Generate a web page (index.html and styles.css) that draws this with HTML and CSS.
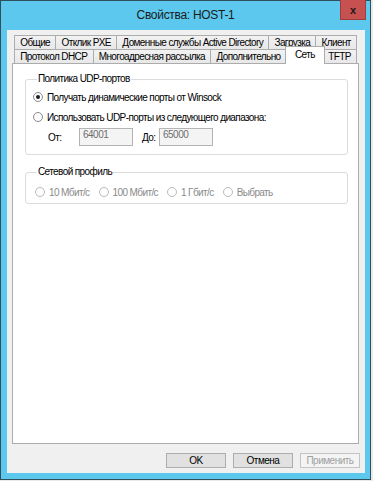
FILE: index.html
```html
<!DOCTYPE html>
<html lang="ru">
<head>
    <meta charset="UTF-8">
    <meta name="viewport" content="width=device-width, initial-scale=1.0">
    <title>Свойства: HOST-1</title>
    <link rel="stylesheet" href="styles.css">
</head>
<body>
    <div class="window">
        <div class="titlebar">
            <span></span>
            <div class="title">Свойства: HOST-1</div>
            <button class="close">x</button>
        </div>

        <div class="client">
            <div class="tabs">
                <div class="tab-row">
                    <div class="tab">Общие</div>
                    <div class="tab">Отклик PXE</div>
                    <div class="tab">Доменные службы Active Directory</div>
                    <div class="tab">Загрузка</div>
                    <div class="tab">Клиент</div>
                </div>
                <div class="tab-row">
                    <div class="tab">Протокол DHCP</div>
                    <div class="tab">Многоадресная рассылка</div>
                    <div class="tab">Дополнительно</div>
                    <div class="tab active">Сеть</div>
                    <div class="tab">TFTP</div>
                </div>
            </div>

            <div class="panel">
                <fieldset class="group">
                    <legend>Политика UDP-портов</legend>
                    <div class="option"><span class="radio checked"></span>Получать динамические порты от Winsock</div>
                    <div class="option"><span class="radio"></span>Использовать UDP-порты из следующего диапазона:</div>
                    <div class="range">
                        <span class="range-label">От:</span>
                        <input type="text" value="64001" disabled>
                        <span class="range-label short">До:</span>
                        <input type="text" value="65000" disabled>
                    </div>
                </fieldset>

                <fieldset class="group profile">
                    <legend>Сетевой профиль</legend>
                    <div class="speeds">
                        <div class="option disabled"><span class="radio"></span>10 Мбит/с</div>
                        <div class="option disabled"><span class="radio"></span>100 Мбит/с</div>
                        <div class="option disabled"><span class="radio"></span>1 Гбит/с</div>
                        <div class="option disabled"><span class="radio"></span>Выбрать</div>
                    </div>
                </fieldset>
            </div>

            <div class="buttons">
                <button class="btn">OK</button>
                <button class="btn">Отмена</button>
                <button class="btn" disabled>Применить</button>
            </div>
        </div>
    </div>
</body>
</html>
```

FILE: styles.css
```css
body {
    margin: 0;
    background: #e9e9e9;
    font-family: "Liberation Sans", Arial, sans-serif;
    font-size: 10px;
    letter-spacing: -0.6px;
    color: #000;
}
.window {
    width: 371px;
    height: 480px;
    box-sizing: border-box;
    background: #5cc8ee;
    border: 1px solid #2f4f5c;
    display: flex;
    flex-direction: column;
}
.titlebar {
    height: 29px;
    display: grid;
    grid-template-columns: 1fr auto 1fr;
}
.title {
    font-size: 12px;
    letter-spacing: -0.3px;
    color: #1a1a1a;
    line-height: 29px;
}
.close {
    justify-self: end;
    align-self: start;
    width: 26px;
    height: 20px;
    margin: -1px 4px 0 0;
    padding: 0;
    background: #c75050;
    border: 1px solid #a03c3c;
    border-top: none;
    color: #1a1a1a;
    font-family: "Liberation Sans", Arial, sans-serif;
    font-size: 11px;
    font-weight: bold;
    line-height: 16px;
}
.client {
    flex: 1;
    margin: 0 5px 6px 6px;
    padding: 5px 6px 5px 5px;
    background: #f0f0f0;
    display: flex;
    flex-direction: column;
}
.tabs {
    margin: 0 2px 0 2px;
}
.tab-row {
    display: flex;
    height: 14px;
}
.tab {
    flex: auto;
    height: 13px;
    margin-left: -1px;
    border: 1px solid #acacac;
    border-bottom: none;
    background: linear-gradient(#f2f2f2, #e8e8e8);
    text-align: center;
    line-height: 14px;
    white-space: nowrap;
    padding: 0 3px;
}
.tab:first-child {
    margin-left: 0;
}
.tab.active {
    position: relative;
    z-index: 1;
    height: 17px;
    margin: -3px -2px 0 -2px;
    background: #fff;
    line-height: 16px;
    padding: 0 7px;
}
.panel {
    flex: 1;
    background: #fff;
    border: 1px solid #acacac;
    padding: 9px 10px 0 12px;
}
.group {
    margin: 0;
    border: 1px solid #dcdcdc;
    border-radius: 3px;
    padding: 2px 7px 7px 7px;
}
.group legend {
    padding: 0 1px;
    margin-left: 4px;
    line-height: 12px;
}
.option {
    display: flex;
    align-items: center;
    height: 20px;
    white-space: nowrap;
}
.radio {
    width: 8px;
    height: 8px;
    border: 1px solid #8a8a8a;
    border-radius: 50%;
    background: #fcfcfc;
    margin-right: 4px;
    display: flex;
    align-items: center;
    justify-content: center;
}
.radio.checked::after {
    content: "";
    width: 4px;
    height: 4px;
    border-radius: 50%;
    background: #1e1e1e;
}
.range {
    display: flex;
    align-items: center;
    height: 20px;
    padding-left: 15px;
}
.range-label {
    width: 31px;
}
.range-label.short {
    width: 17px;
    margin-left: 9px;
}
.range input {
    width: 54px;
    height: 18px;
    box-sizing: border-box;
    border: 1px solid #b4b4b4;
    background: #f4f4f4;
    color: #6d6d6d;
    font-family: "Liberation Sans", Arial, sans-serif;
    font-size: 10px;
    letter-spacing: -0.5px;
    padding: 0 2px 5px 3px;
}
.profile {
    margin-top: 11px;
    padding-top: 6px;
    padding-bottom: 3px;
}
.speeds {
    display: flex;
    gap: 9px;
    padding-left: 2px;
}
.option.disabled {
    color: #8a8a8a;
    height: 16px;
}
.option.disabled .radio {
    border-color: #bcbcbc;
}
.buttons {
    display: flex;
    justify-content: flex-end;
    gap: 7px;
    margin: 9px -1px 0 0;
}
.btn {
    width: 60px;
    height: 15px;
    padding: 0;
    border: 1px solid #adadad;
    background: #e1e1e1;
    font-family: "Liberation Sans", Arial, sans-serif;
    font-size: 10px;
    letter-spacing: -0.5px;
    color: #000;
}
.btn:disabled {
    background: #f4f4f4;
    border-color: #c4c4c4;
    color: #a0a0a0;
}
```
